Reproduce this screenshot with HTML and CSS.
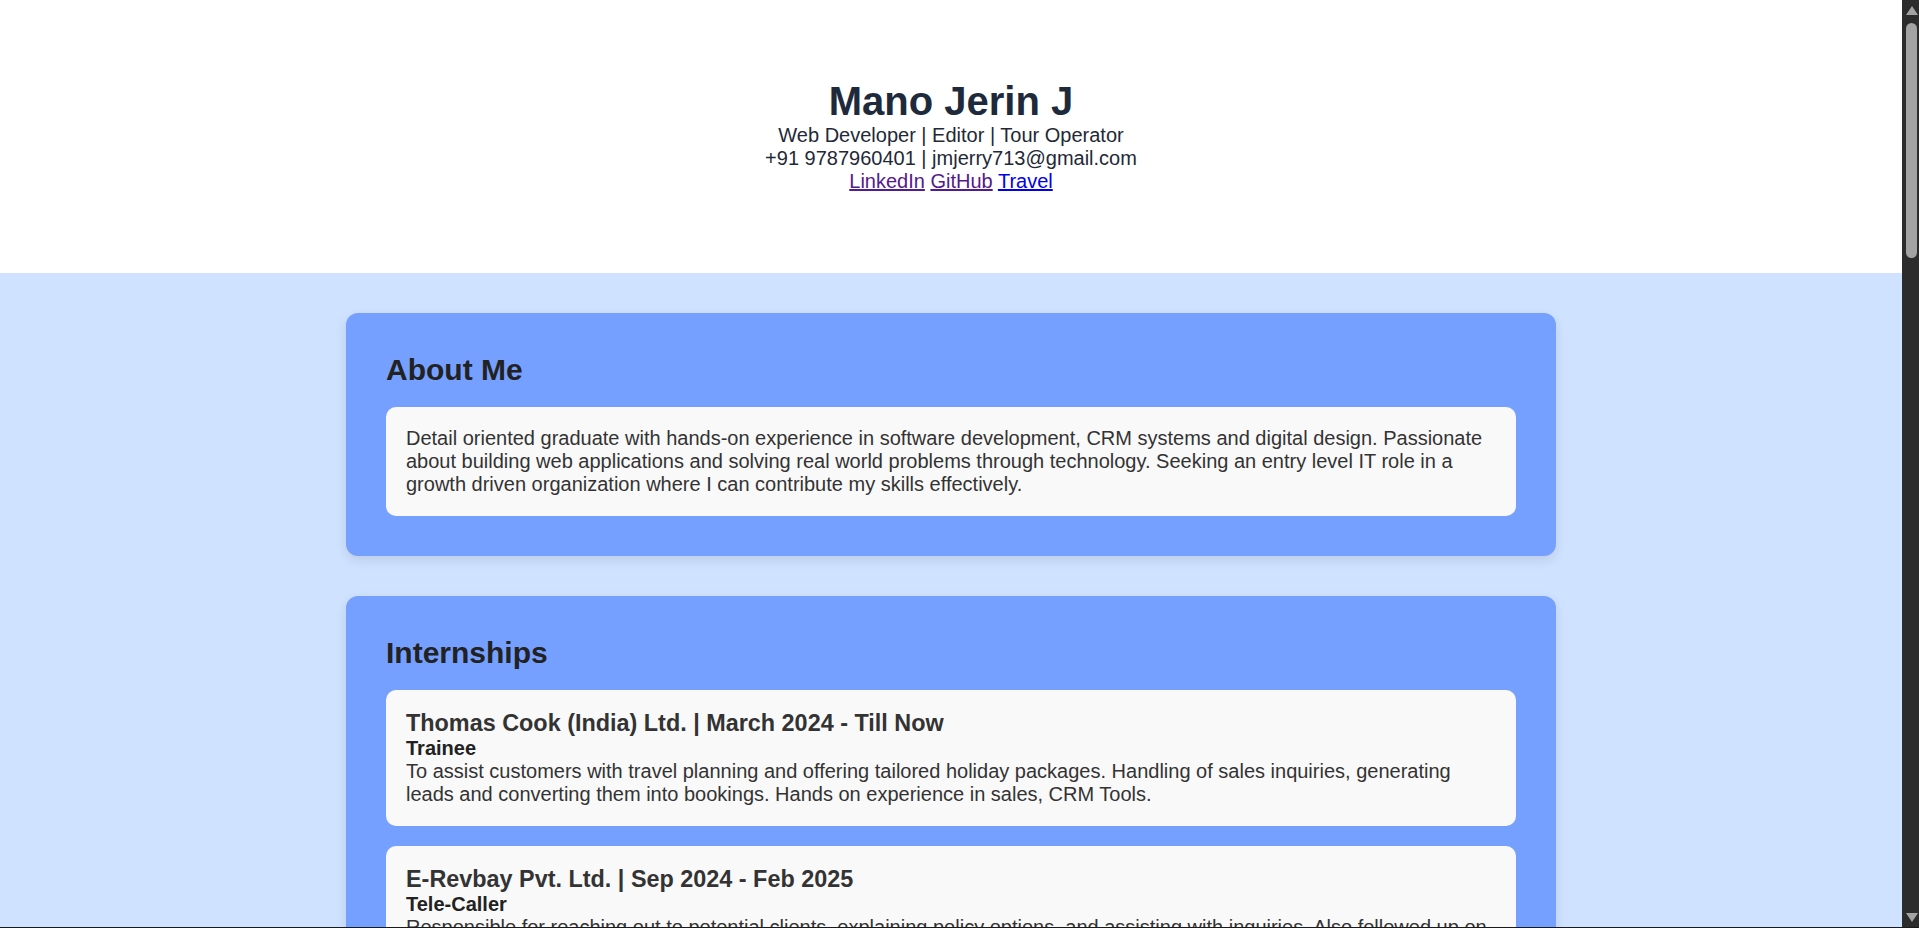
FILE: index.html
```html
<!DOCTYPE html>
<html lang="en">
<head>
<meta charset="utf-8">
<title>Mano Jerin J | Resume</title>
<link rel="stylesheet" href="styles.css">
</head>
<body>
<header class="hero">
  <h1 class="hero-name">Mano Jerin J</h1>
  <p class="hero-line">Web Developer | Editor | Tour Operator</p>
  <p class="hero-line">+91 9787960401 | jmjerry713@gmail.com</p>
  <p class="hero-line hero-links"><a class="link visited" href="#linkedin">LinkedIn</a> <a class="link visited" href="#github">GitHub</a> <a class="link" href="#travel">Travel</a></p>
</header>
<main class="content">
  <section class="card">
    <h2 class="card-title">About Me</h2>
    <div class="item">
      <p class="item-text">Detail oriented graduate with hands-on experience in software development, CRM systems and digital design. Passionate about building web applications and solving real world problems through technology. Seeking an entry level IT role in a growth driven organization where I can contribute my skills effectively.</p>
    </div>
  </section>
  <section class="card">
    <h2 class="card-title">Internships</h2>
    <div class="item">
      <h3 class="item-title">Thomas Cook (India) Ltd. | March 2024 - Till Now</h3>
      <p class="item-role">Trainee</p>
      <p class="item-text">To assist customers with travel planning and offering tailored holiday packages. Handling of sales inquiries, generating leads and converting them into bookings. Hands on experience in sales, CRM Tools.</p>
    </div>
    <div class="item">
      <h3 class="item-title">E-Revbay Pvt. Ltd. | Sep 2024 - Feb 2025</h3>
      <p class="item-role">Tele-Caller</p>
      <p class="item-text">Responsible for reaching out to potential clients, explaining policy options, and assisting with inquiries. Also followed up on leads and maintained accurate records of customer interactions.</p>
    </div>
  </section>
  <section class="card">
    <h2 class="card-title">Education</h2>
    <div class="item">
      <h3 class="item-title">Bachelor of Computer Applications</h3>
      <p class="item-text">Graduated with a focus on software development and web technologies.</p>
    </div>
  </section>
  <section class="card">
    <h2 class="card-title">Skills</h2>
    <div class="item">
      <p class="item-text">HTML, CSS, JavaScript, CRM Tools, Video Editing, Graphic Design, Customer Communication.</p>
    </div>
  </section>
</main>
<div class="scrollbar" aria-hidden="true">
  <span class="sb-arrow sb-up"></span>
  <span class="sb-thumb"></span>
  <span class="sb-arrow sb-down"></span>
</div>
<div class="frame-edge" aria-hidden="true"></div>
</body>
</html>
```

FILE: styles.css
```css
html, body {
  margin: 0;
  padding: 0;
}

body {
  font-family: "Liberation Sans", Arial, sans-serif;
  font-size: 20px;
  background: #cfe2ff;
  color: #333333;
  margin-right: 17px;
}

.hero {
  background: #ffffff;
  text-align: center;
  padding: 79px 20px 80px;
  color: #1f2937;
}

.hero-name {
  margin: 0;
  font-size: 40px;
  font-weight: bold;
  color: #1e2a3b;
}

.hero-line {
  margin: 0;
}

.link {
  color: #0000ee;
  text-decoration: underline;
}

.link.visited {
  color: #551a8b;
}

.content {
  padding: 40px 20px;
  display: flex;
  flex-direction: column;
  align-items: center;
  gap: 40px;
}

.card {
  box-sizing: border-box;
  width: 100%;
  max-width: 1210px;
  background: #76a0ff;
  border-radius: 12px;
  padding: 40px;
  box-shadow: 0 4px 12px rgba(0, 0, 0, 0.1);
  display: flex;
  flex-direction: column;
  gap: 20px;
}

.card-title {
  margin: 0;
  font-size: 30px;
  font-weight: bold;
  color: #222222;
}

.item {
  background: #f9f9f9;
  border-radius: 10px;
  padding: 20px;
}

.item-title {
  margin: 0;
  font-size: 23.4px;
  font-weight: bold;
  color: #333333;
}

.item-role {
  margin: 0;
  font-weight: bold;
  color: #222222;
}

.item-text {
  margin: 0;
  color: #333333;
}

/* browser chrome: dark scrollbar drawn over the right edge */
.scrollbar {
  position: fixed;
  top: 0;
  right: 0;
  width: 17px;
  height: 100vh;
  background: #2c2c2c;
  z-index: 10;
}

.sb-arrow {
  position: absolute;
  left: 4px;
  width: 0;
  height: 0;
  border-left: 6px solid transparent;
  border-right: 6px solid transparent;
}

.sb-up {
  top: 6px;
  border-bottom: 9px solid #a3a3a3;
}

.sb-down {
  bottom: 6px;
  border-top: 9px solid #a3a3a3;
}

.sb-thumb {
  position: absolute;
  top: 23px;
  left: 4px;
  width: 11px;
  height: 235px;
  border-radius: 6px;
  background: #a3a3a3;
}

.frame-edge {
  position: fixed;
  left: 0;
  right: 0;
  bottom: 0;
  height: 1px;
  background: #1a1a1a;
  z-index: 11;
}
```
